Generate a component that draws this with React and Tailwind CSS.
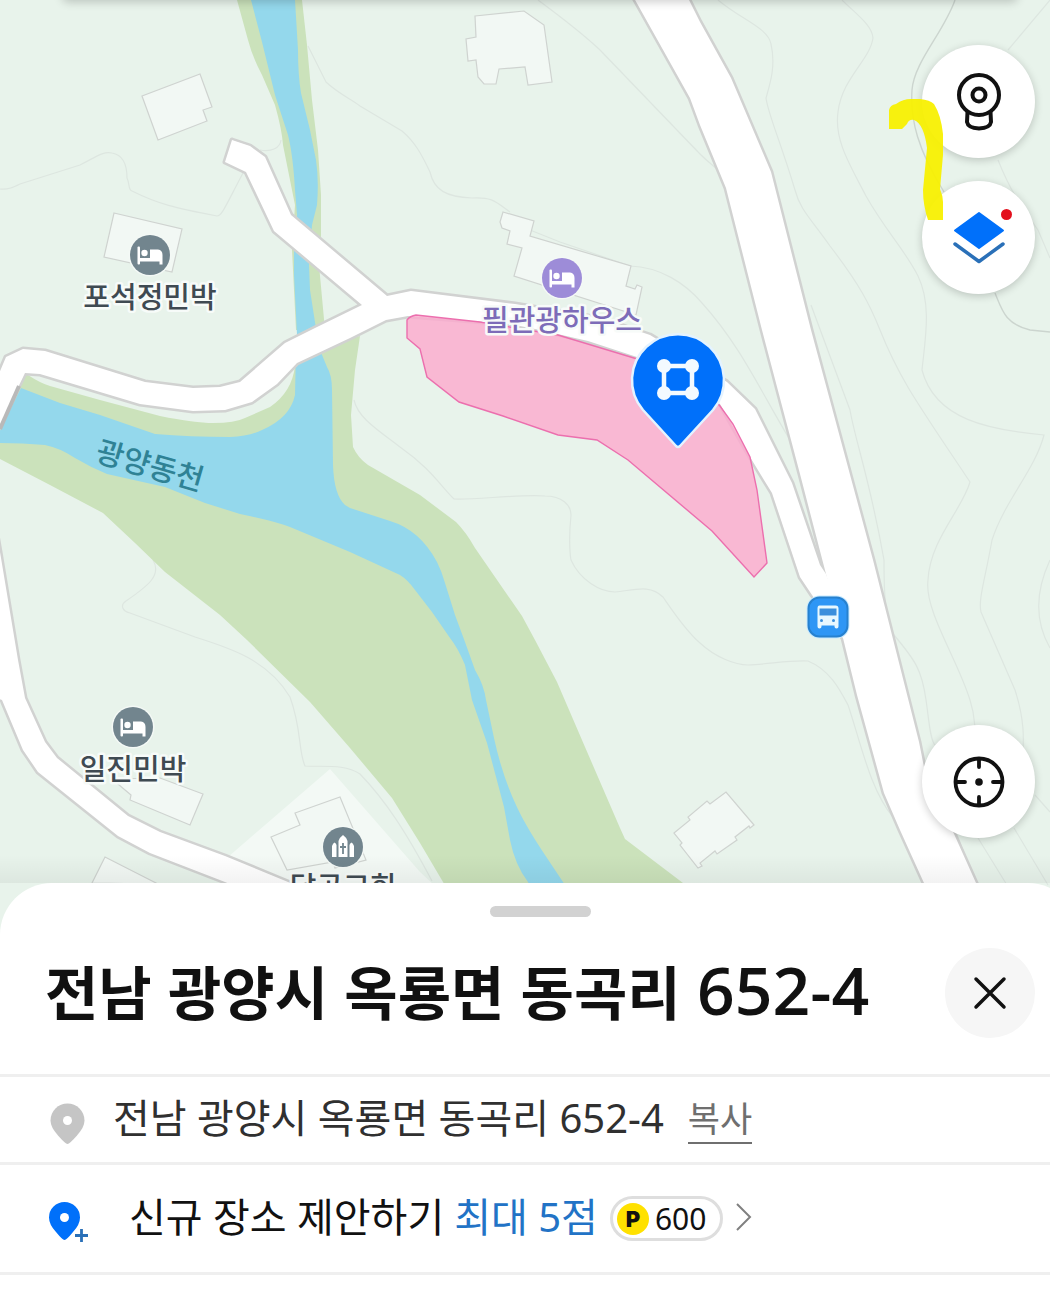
import { useState } from "react";

const CONTOURS = [
  "M0 189C8 190 14 187 20 184L80 165C96 157 103 151 112 153C124 155 127 167 127 178C130 184 128 190 132 191C158 204 175 208 217 216C222 216 226 205 243 173",
  "M260 150C272 152 280 148 281 140",
  "M308 46L326 82C340 95 350 98 360 106L402 131C415 142 422 155 430 172C434 190 446 197 472 198C492 197 495 201 510 212",
  "M530 230L560 242L630 266C660 267 685 283 702 303C740 345 760 390 790 440",
  "M538 0C565 20 582 33 600 50L700 154C709 163 714 166 718 170",
  "M718 0C742 20 768 28 771 44C776 66 770 84 766 98C768 114 780 140 795 190C800 210 812 220 830 246C860 285 870 305 880 330C900 380 918 404 970 482C962 510 930 540 928 580C924 610 958 660 970 700C978 725 974 745 975 760",
  "M842 0C856 14 872 25 873 38C870 60 842 78 838 112C834 140 850 165 866 196C885 230 905 250 918 276C932 305 925 340 922 370C935 420 990 430 1044 435C1035 470 1005 500 992 540C985 580 978 600 981 612L1015 690C1028 730 1022 750 1022 780",
  "M1050 0L1008 50M998 160C1010 190 1020 205 1038 230L1050 258",
  "M811 305L850 410C855 440 870 480 884 560C884 600 886 625 894 635C915 660 922 670 926 700C929 720 930 740 935 745",
  "M354 400C358 418 378 430 400 447C430 468 440 485 454 499C475 500 520 494 545 496C562 496 571 505 571 515C568 545 571 560 571 560C580 580 600 592 615 592C635 590 650 584 663 597C672 610 685 630 700 643C715 657 735 665 748 665C770 664 790 660 808 661C830 670 840 690 848 705C860 740 870 790 893 817",
  "M153 560C162 575 148 586 126 601C120 605 122 611 130 613L195 637C230 648 268 660 290 697C302 730 298 750 305 766C325 767 345 764 360 774C385 800 405 830 432 881",
  "M978 838L1010 890M1014 828L1048 885M1035 795L1050 812M956 832L978 890",
  "M1050 560C1036 590 1034 620 1050 648",
];

const BUILDINGS = [
  "M142 96L200 74L212 107L203 110L207 121L158 140Z",
  "M114 213L182 229L172 272L104 257Z",
  "M475 16L524 11L544 25L552 82L528 85L525 67L499 69L496 84L484 84L478 77L476 60L468 61L466 39L476 37Z",
  "M503 212L534 221L530 236L631 266L626 286L635 289L637 285L642 287L636 315L514 276L522 248L507 244L510 231L502 228L500 222Z",
  "M674 833L690 820L688 817L707 801L710 804L726 792L754 825L750 828L749 826L735 837L737 840L717 854L715 851L700 863L702 866L698 868L680 845L682 843Z",
  "M112 779L131 795L130 800L190 825L203 794L160 778Z",
  "M92 883L105 857L158 884Z",
  "M271 837L300 825L295 813L340 797L366 860L335 868L333 862L287 870Z",
];

const ROADS = [
  "M-10 395L6 357L23 349L45 351L145 382L193 388L220 387L240 382L285 343L315 328L362 305L274 231L246 172L225 162L232 140L250 146L265 157L291 215L387 296L411 291L515 304L600 318L650 335L727 382L755 409L792 483L820 565L826 574L850 640L843 638L812 595L800 577L772 493L750 457L720 404L640 358L588 341L540 330L510 324L408 316L386 320L350 338L297 363L277 384L252 402L225 410L193 411L140 404L40 374L25 373L-12 450Z",
  "M634 -2L690 98L700 125L726 188L762 330L800 474L826 574L843 638L857 695L884 793L900 830L924 883L950 945L1004 945L976 883L924 767L919 742L873 560L811 330L771 172L731 78L700 22L688 -2Z",
  "M-3 535L0 552L18 660L25 698L45 742L57 758L128 816L160 832L225 856L288 882L440 944L370 944L225 882L150 853L118 836L38 772L23 750L2 700L-3 698Z",
];

export default function App() {
  const [sheetOpen, setSheetOpen] = useState(true);

  return (
    <div
      lang="ko"
      className="min-h-screen flex flex-col overflow-hidden bg-white font-['Noto_Sans','Noto_Sans_CJK_KR',sans-serif]"
    >
      {/* the screen runs 30px past the right edge */}
      <div className="-mr-[30px] flex-1 flex flex-col">
        <main className="relative flex-1 min-h-[600px] overflow-hidden bg-[#e8f3eb]">
          <MapCanvas />
          <div className="absolute -top-2 inset-x-16 h-2 rounded-full shadow-[0_0_10px_2px_rgba(0,0,0,0.2)]" />
          <div className="absolute inset-x-0 bottom-14 h-7 bg-gradient-to-t from-black/5 to-transparent" />
          <MapControls />
        </main>
        {sheetOpen && <PlaceSheet onClose={() => setSheetOpen(false)} />}
      </div>
    </div>
  );
}

function MapCanvas() {
  return (
    <svg
      viewBox="0 0 1080 939"
      preserveAspectRatio="xMinYMin slice"
      className="absolute inset-0 w-full h-full"
      role="img"
      aria-label="지도"
    >
      <path d="M330 769L228 857L300 900L450 900L420 872Z" fill="#f3f9f5" />
      <g fill="none" stroke="#dde6e0" strokeWidth="1.2">
        {CONTOURS.map((d) => <path key={d} d={d} />)}
      </g>
      <path
        d="M955 0C944 32 914 62 912 90C910 120 918 150 944 192M995 293C1002 310 1005 324 1030 330L1050 332"
        fill="none" stroke="#ccd5cf" strokeWidth="1.4"
      />

      {/* river banks */}
      <g fill="#cbe2bb">
        <path d="M237 0L248 40Q252 56 262 75L275 105Q282 130 283 145L289 175L295 205L292 250L296 330L325 330L319 265L321 235L321 195L318 150L312 100L307 45L302 0Z" />
        <path d="M20 374L28 375Q40 383 50 386L100 400L160 416Q195 423 213 423Q235 423 245 418L270 407Q292 392 295 366L297 350L360 336L355 370L351 415L353 447Q358 458 368 465L420 495L456 522Q466 532 475 548L522 616L535 640L557 682L585 747L620 828L625 839L683 883L760 940L478 940L443 882L420 843L392 798L350 748L310 702L247 640L220 615L165 572L135 543L103 513L50 485L0 459L0 400Z" />
      </g>
      {/* river */}
      <g fill="#94d8ec">
        <path d="M251 0L262 42L275 95L288 135Q293 155 295 190L297 215L294 250L294 275L297 335L317 335L310 290L309 265L312 225L317 205Q319 180 316 160L310 130L301 93Q298 75 298 50L295 0Z" />
        <path d="M21 388L60 403L100 415L155 434Q190 437 230 437Q250 436 262 430Q290 418 295 395L296 350L320 350L327 367Q332 375 332 390L333 465Q334 495 345 505L350 508L390 521Q420 530 437 562Q442 572 445 583L455 615L465 642L475 670Q484 685 486 700L494 738Q502 775 516 805Q525 825 545 855L563 882L600 940L560 940L528 882Q515 865 510 840L504 807L487 743L472 700L465 665Q458 648 450 638L432 612L415 590Q408 580 400 575L350 552L290 527Q275 521 240 514L205 503L165 487L107 474Q90 467 75 458Q60 448 45 445Q22 443 0 443L0 430Z" />
      </g>

      <g fill="#f2f8f4" stroke="#cfd3d0" strokeWidth="1.2">
        {BUILDINGS.map((d) => <path key={d} d={d} />)}
      </g>

      {/* outlines first, so that the junctions stay open */}
      <g fill="none" stroke="#d1d2d1" strokeWidth="5" strokeLinejoin="round">
        {ROADS.map((d) => <path key={d} d={d} />)}
      </g>
      <g fill="#fff">
        {ROADS.map((d) => <path key={d} d={d} />)}
      </g>
      <path d="M19 386L0 429" stroke="#b9b9b9" strokeWidth="4" />

      {/* selected parcel */}
      <path
        d="M407 320Q410 316 416 315L480 322L558 335L634 358L690 374L720 406L733 424L750 457L757 490L767 563L754 577L712 531L628 460L597 440L558 435L503 416L459 402L427 377L420 349L407 338Z"
        fill="#fca9cd" fillOpacity="0.8" stroke="#ec6fae" strokeWidth="1.4"
      />

      <MapLabel x={150} y={308} color="#3f4a52">포석정민박</MapLabel>
      <MapLabel x={133} y={780} color="#3f4a52">일진민박</MapLabel>
      <MapLabel x={343} y={898} color="#3f4a52">달곡교회</MapLabel>
      <MapLabel x={562} y={331} color="#7d6cb8">필관광하우스</MapLabel>
      <text
        x="147" y="476" textAnchor="middle" fontSize="30" fill="#2f8295" transform="rotate(16 147 476)"
        className="font-medium font-['Noto_Sans_CJK_KR',sans-serif]"
      >
        광양동천
      </text>

      <BedMarker x={150} y={255} color="#72858e" />
      <BedMarker x={133} y={727} color="#72858e" />
      <BedMarker x={562} y={278} color="#9d8cd8" />
      <ChurchMarker x={343} y={847} />

      {/* bus stop */}
      <g transform="translate(807.5 596.5)">
        <rect x="-1" y="-1" width="43" height="43" rx="13" fill="#c8eaff" />
        <rect x="1" y="1" width="39" height="39" rx="11" fill="#2e96f5" stroke="#2781cf" strokeWidth="2" />
        <path d="M12 9H28Q31 9 31 12V30Q31 32 29 32T27 30V29H14V30Q14 32 12 32T10 30V12Q10 9 12 9Z" fill="#e8f8ff" />
        <rect x="12" y="12" width="17" height="7" fill="#3c8fdc" />
        <circle cx="14" cy="24" r="1.5" fill="#3c8fdc" />
        <circle cx="26" cy="24" r="1.5" fill="#3c8fdc" />
      </g>

      {/* parcel pin */}
      <path d="M676 446L643 410A46 46 0 1 1 713 410L680 446Q678 448 676 446Z" fill="#0070fa" stroke="#e4f3ff" strokeWidth="2.5" strokeLinejoin="round" />
      <rect x="664" y="366" width="28" height="27" fill="none" stroke="#f3faff" strokeWidth="4.5" />
      <g fill="#f3faff">
        <circle cx="664" cy="366" r="7" />
        <circle cx="692" cy="366" r="7" />
        <circle cx="664" cy="393" r="7" />
        <circle cx="692" cy="393" r="7" />
      </g>
    </svg>
  );
}

function MapLabel({ x, y, color, children }) {
  return (
    <text
      x={x} y={y} textAnchor="middle" fontSize="29" fill={color}
      stroke="#f7fbf9" strokeWidth="5" strokeLinejoin="round" paintOrder="stroke"
      className="font-medium font-['Noto_Sans_CJK_KR',sans-serif]"
    >
      {children}
    </text>
  );
}

function BedMarker({ x, y, color }) {
  return (
    <g transform={`translate(${x} ${y})`}>
      <circle r="21.5" fill="#f4f9f6" />
      <circle r="20" fill={color} />
      <g fill="#fff">
        <rect x="-12.5" y="-8.5" width="2.5" height="18" rx="1" />
        <rect x="-11" y="3" width="23" height="3.5" />
        <path d="M0 -5.5H8Q12.5 -5 12.5 0V9.5H9.5V5H0Z" />
        <circle cx="-5.5" cy="-2" r="3.2" />
      </g>
    </g>
  );
}

function ChurchMarker({ x, y }) {
  return (
    <g transform={`translate(${x} ${y})`}>
      <circle r="21.5" fill="#f4f9f6" />
      <circle r="20" fill="#72858e" />
      <g fill="#fff">
        <path d="M-4.5 10V-6Q-3 -10 0 -12Q3 -10 4.5 -6V10Z" />
        <path d="M-11 10V-1Q-10 -4 -8.5 -4.5Q-7 -4 -6.5 -2V10Z" />
        <path d="M11 10V-1Q10 -4 8.5 -4.5Q7 -4 6.5 -2V10Z" />
      </g>
      <path d="M0 -4V7M-3 0H3" stroke="#72858e" strokeWidth="1.8" />
    </g>
  );
}

function RoundButton({ label, children }) {
  return (
    <button
      type="button"
      aria-label={label}
      className="pointer-events-auto relative size-[113px] rounded-full bg-white flex items-center justify-center shadow-[0_2px_8px_rgba(0,0,0,0.2)]"
    >
      {children}
    </button>
  );
}

function MapControls() {
  return (
    <div className="pointer-events-none absolute inset-0 pt-[45px] pr-[45px] pb-[101px] flex flex-col items-end justify-between">
      <div className="relative flex flex-col gap-[23px]">
        <RoundButton label="거리뷰">
          <svg width="48" height="60" viewBox="0 0 48 60" fill="none" stroke="#111" strokeWidth="4" strokeLinecap="round" strokeLinejoin="round">
            <circle cx="24" cy="23" r="20" />
            <circle cx="24" cy="23" r="6.5" />
            <path d="M12.5 40L12 50Q13 56 24 56.5Q35 56 36 50L35.5 40" />
          </svg>
        </RoundButton>
        <RoundButton label="지도 레이어">
          <svg width="56" height="56" viewBox="0 0 56 56" fill="none">
            <path d="M28 3L52 20.5L28 38L4 20.5Z" fill="#0070fa" stroke="#0070fa" strokeWidth="2" strokeLinejoin="round" />
            <path d="M4 34L28 51.5L52 34" stroke="#2a70b8" strokeWidth="3.5" strokeLinecap="round" strokeLinejoin="round" />
          </svg>
          <span className="absolute top-7 right-[23px] size-[11px] rounded-full bg-[#e3101d]" />
        </RoundButton>
        {/* highlighter stroke */}
        <svg className="absolute -left-[33px] top-[53px]" width="56" height="124" viewBox="889 98 56 124">
          <path
            d="M889 110Q890 105 896 104Q903 99 911 99H920Q930 100 934 104Q941 115 943 134V155L940 189Q943 196 943 202V220H928Q923 205 923 190L927 148Q924 124 914 120Q909 119 907 124L902 129H889Z"
            fill="#f8f000" fillOpacity="0.94"
          />
        </svg>
      </div>
      <RoundButton label="현재 위치">
        <svg width="52" height="52" viewBox="0 0 52 52" fill="none" stroke="#111" strokeWidth="3.8">
          <circle cx="26" cy="26" r="23.5" />
          <path d="M26 3V11M26 41V49M3 26H12M40 26H49" strokeLinecap="round" />
          <circle cx="26" cy="26" r="3.8" fill="#111" stroke="none" />
        </svg>
      </RoundButton>
    </div>
  );
}

function PlaceSheet({ onClose }) {
  return (
    <section className="relative -mt-14 pt-[23px] pb-[37px] rounded-t-[52px] bg-white">
      <div className="mx-auto h-[11px] w-[101px] rounded-full bg-[#d2d2d2]" />

      <header className="pt-[31px] pb-9 px-[45px] flex items-center justify-between">
        <h1 className="pb-2 text-[58px] leading-[80px] font-bold text-[#111] font-['Noto_Sans_CJK_KR',sans-serif]">
          전남 광양시 옥룡면 동곡리{" "}
          <span className="text-[66px] font-semibold font-['Open_Sans',sans-serif]">652-4</span>
        </h1>
        <button
          type="button"
          aria-label="닫기"
          onClick={onClose}
          className="size-[90px] shrink-0 rounded-full bg-[#f6f6f6] flex items-center justify-center"
        >
          <svg width="34" height="34" viewBox="0 0 34 34" stroke="#111" strokeWidth="3.5" strokeLinecap="round">
            <path d="M3 3L31 31M31 3L3 31" />
          </svg>
        </button>
      </header>

      <div className="h-[88px] border-t-3 border-[#efefef] pl-[50px] pb-1 flex items-center text-[40px] leading-[56px]">
        <svg className="mt-3 mr-7" width="35" height="42" viewBox="0 0 35 42">
          <path d="M17.5 41Q15.5 41 8 32.5Q0.5 24 0.5 17.5A17 17 0 0 1 34.5 17.5Q34.5 24 27 32.5Q19.5 41 17.5 41Z" fill="#c5c5c5" />
          <circle cx="17.5" cy="17.5" r="4.5" fill="#fff" />
        </svg>
        <p className="text-[#303030]">전남 광양시 옥룡면 동곡리 652-4</p>
        <button type="button" className="ml-6 mt-1 text-[35px] leading-[46px] text-[#6f6f6f] border-b-2 border-[#6f6f6f]">
          복사
        </button>
      </div>

      <a
        href="#suggest"
        className="h-[113px] border-y-3 border-[#efefef] pl-12 pb-1 flex items-center text-[40px] leading-[56px] text-[#111]"
      >
        <svg className="mt-3 mr-10" width="41" height="43" viewBox="0 0 41 43">
          <path d="M16.5 39Q14.5 39 8 31Q1 23.5 1 16.5A15.5 15.5 0 0 1 32 16.5Q32 23.5 25 31Q18.5 39 16.5 39Z" fill="#0070fa" />
          <circle cx="16.5" cy="16.5" r="4.5" fill="#fff" />
          <path d="M33.5 28V41M27 34.5H40" stroke="#2a70b8" strokeWidth="2.8" />
        </svg>
        신규 장소 제안하기
        <span className="ml-2.5 text-[#2273c6]">최대 5점</span>
        <span className="ml-3 mt-1 h-[45px] w-[113px] rounded-full border-3 border-[#dedede] pl-1 flex items-center gap-1.5 text-[30px] leading-[38px]">
          <span className="size-8 rounded-full bg-[#ffe100] flex items-center justify-center font-['Inter',sans-serif] text-[22px] leading-none font-black">
            P
          </span>
          600
        </span>
        <svg className="ml-3" width="18" height="30" viewBox="0 0 18 30" fill="none" stroke="#808080" strokeWidth="2">
          <path d="M2 2L15 15L2 28" />
        </svg>
      </a>
    </section>
  );
}
